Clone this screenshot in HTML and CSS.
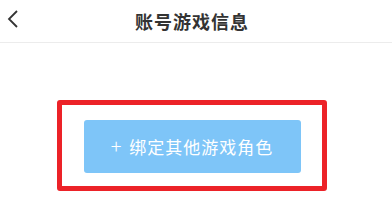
FILE: index.html
```html
<!DOCTYPE html>
<html>
	<head>
		<meta charset="utf-8">
		<title>账号游戏信息</title>
		<link rel="stylesheet" href="styles.css">
	</head>
	<body>
		<div class="header">
			<span class="back">
				<svg width="14" height="20" viewBox="0 0 14 20"><polyline points="10,2 2,10 10,18" fill="none" stroke="#333" stroke-width="1.8"/></svg>
			</span>
			<h1 class="title">账号游戏信息</h1>
		</div>
		<div class="main">
			<div class="mark">
				<a class="bind-btn"><span class="plus">+</span>绑定其他游戏角色</a>
			</div>
		</div>
	</body>
</html>
```

FILE: styles.css
```css
*{margin: 0; padding: 0; box-sizing: border-box;}
body{background: #fff; font-family: "Noto Sans CJK SC", "Noto Sans", sans-serif; width: 392px; height: 212px; overflow: hidden;}
.header{position: relative; height: 43px; border-bottom: 1px solid #ececec; display: flex; align-items: center; justify-content: center; padding-right: 8px;}
.back{position: absolute; left: 7px; top: 9px;}
.back svg{display: block;}
.title{font-size: 18px; font-weight: bold; color: #333; letter-spacing: 1px;}
.main{display: flex; justify-content: center; padding-top: 57px; padding-right: 8px;}
.mark{width: 270px; height: 91px; border: 5px solid #ec2228; border-radius: 3px; display: flex; align-items: center; justify-content: center;}
.bind-btn{display: flex; align-items: center; justify-content: center; width: 217px; height: 53px; margin-top: 2px; background: #7ec5f8; border-radius: 3px; color: #fff; font-size: 17px; letter-spacing: 1px;}
.plus{font-size: 20px; font-weight: 300; margin-right: 7px; margin-top: -2px;}
```
